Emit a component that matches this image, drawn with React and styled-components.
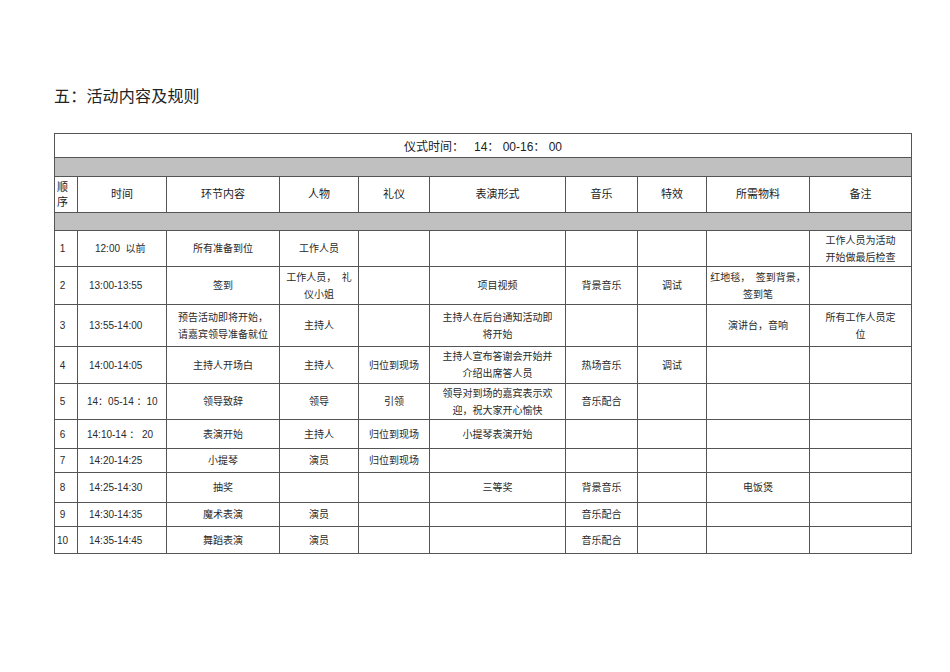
import React from "react";
import styled, { createGlobalStyle } from "styled-components";

const Global = createGlobalStyle`
  html, body { margin: 0; padding: 0; background: #fff; }
  body { font-family: "Liberation Sans", "Noto Sans CJK SC", sans-serif; color: #222; }
`;

const Page = styled.div`
  width: 950px;
  height: 672px;
  padding: 88px 0 0 54px;
  box-sizing: border-box;
`;

const Heading = styled.h2`
  margin: 0 0 27px 0;
  font-size: 16px;
  font-weight: normal;
  line-height: 18px;
  color: #222;
  letter-spacing: 0.2px;
`;

const Table = styled.table`
  border-collapse: collapse;
  table-layout: fixed;
  width: 857px;
  border: 1px solid #444;
`;

const Cell = styled.td`
  border: 1px solid #555;
  height: ${(p) => p.$h}px;
  box-sizing: border-box;
  font-size: 10px;
  line-height: 17px;
  white-space: pre;
  text-align: ${(p) => p.$align || "center"};
  padding: 0 ${(p) => (p.$pr != null ? p.$pr : 2)}px 0 ${(p) => (p.$pl != null ? p.$pl : 2)}px;
  vertical-align: middle;
  color: #2a2a2a;
  overflow: hidden;
`;

const GrayBar = styled.td`
  background: #c0c0c0;
  border: 1px solid #555;
  height: ${(p) => p.$h}px;
  padding: 0;
`;

const HeadCell = styled.td`
  border: 1px solid #555;
  height: 35px;
  font-size: 11px;
  line-height: 15px;
  text-align: ${(p) => p.$align || "center"};
  padding: 0 ${(p) => (p.$pad != null ? p.$pad : 3)}px;
  vertical-align: middle;
  color: #222;
`;

const TitleCell = styled.td`
  border: 1px solid #555;
  height: 23px;
  font-size: 12px;
  text-align: center;
  padding: 0;
  color: #222;
`;

const widths = [23, 89, 113, 79, 71, 136, 72, 69, 103, 102];
const headers = ["顺序", "时间", "环节内容", "人物", "礼仪", "表演形式", "音乐", "特效", "所需物料", "备注"];

const rows = [
  { h: 36, c: ["1", "12:00  以前", "所有准备到位", "工作人员", "", "", "", "", "", "工作人员为活动\n开始做最后检查"] },
  { h: 38, c: ["2", "13:00-13:55", "签到", "工作人员，  礼\n仪小姐", "", "项目视频", "背景音乐", "调试", "红地毯，  签到背景，\n签到笔", ""] },
  { h: 42, c: ["3", "13:55-14:00", "预告活动即将开始，\n请嘉宾领导准备就位", "主持人", "", "主持人在后台通知活动即\n将开始", "", "", "演讲台，音响", "所有工作人员定\n位"] },
  { h: 37, c: ["4", "14:00-14:05", "主持人开场白", "主持人", "归位到现场", "主持人宣布答谢会开始并\n介绍出席答人员", "热场音乐", "调试", "", ""] },
  { h: 36, c: ["5", "14：05-14 ：10", "领导致辞", "领导", "引领", "领导对到场的嘉宾表示欢\n迎，祝大家开心愉快", "音乐配合", "", "", ""] },
  { h: 29, c: ["6", "14:10-14 ： 20", "表演开始", "主持人", "归位到现场", "小提琴表演开始", "", "", "", ""] },
  { h: 24, c: ["7", "14:20-14:25", "小提琴", "演员", "归位到现场", "", "", "", "", ""] },
  { h: 30, c: ["8", "14:25-14:30", "抽奖", "", "", "三等奖", "背景音乐", "", "电饭煲", ""] },
  { h: 24, c: ["9", "14:30-14:35", "魔术表演", "演员", "", "", "音乐配合", "", "", ""] },
  { h: 27, c: ["10", "14:35-14:45", "舞蹈表演", "演员", "", "", "音乐配合", "", "", ""] },
];

function cellProps(ci, ri) {
  if (ci === 0) return { $pl: 0, $pr: 7 };
  if (ci === 1) return { $align: "left", $pl: ri === 0 ? 17 : ri === 4 || ri === 5 ? 9 : 11 };
  return {};
}

export default function App() {
  return (
    <>
      <Global />
      <Page>
        <Heading>五：活动内容及规则</Heading>
        <Table>
          <colgroup>
            {widths.map((w, i) => (
              <col key={i} style={{ width: w }} />
            ))}
          </colgroup>
          <tbody>
            <tr>
              <TitleCell colSpan={10}>仪式时间：&nbsp;&nbsp;&nbsp;14：&nbsp;00-16：&nbsp;00</TitleCell>
            </tr>
            <tr>
              <GrayBar colSpan={10} $h={18} />
            </tr>
            <tr>
              {headers.map((h, i) => (
                <HeadCell key={i} $align={i === 0 ? "left" : "center"} $pad={i === 0 ? 2 : 3}>
                  {h}
                </HeadCell>
              ))}
            </tr>
            <tr>
              <GrayBar colSpan={10} $h={17} />
            </tr>
            {rows.map((r, ri) => (
              <tr key={ri}>
                {r.c.map((t, ci) => (
                  <Cell key={ci} $h={r.h} {...cellProps(ci, ri)}>
                    {t}
                  </Cell>
                ))}
              </tr>
            ))}
          </tbody>
        </Table>
      </Page>
    </>
  );
}
